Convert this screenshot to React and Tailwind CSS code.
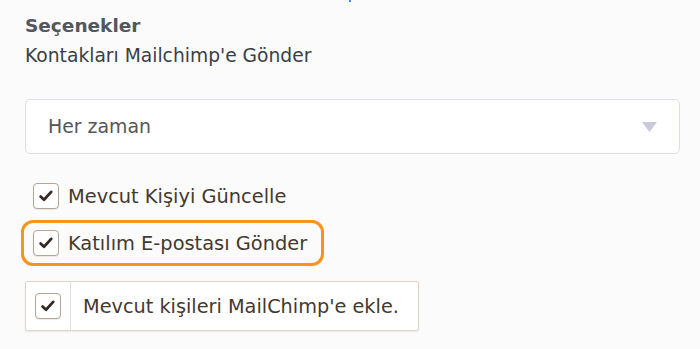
import React from "react";

function Check() {
  return (
    <div className="w-[26px] h-[26px] shrink-0 rounded-[4px] border-[1.5px] border-[#b5a595] bg-white flex items-center justify-center shadow-[0_1px_1px_rgba(0,0,0,0.08)]">
      <svg width="18" height="18" viewBox="0 0 18 18" fill="none">
        <path d="M3.6 9.6 L7 12.8 L14.2 4.9" stroke="#352b23" strokeWidth="2.8" strokeLinecap="round" strokeLinejoin="round" />
      </svg>
    </div>
  );
}

export default function App() {
  return (
    <div
      className="min-h-screen w-full bg-[#fbfbfb] pl-[25px] pt-px"
      style={{ fontFamily: '"DejaVu Sans", "Liberation Sans", sans-serif' }}
    >
      <div className="h-0">
        <div className="ml-[324px] -mt-px w-[2px] h-[2px] bg-[#3b8ef0]" />
      </div>
      <div className="mt-[14px] text-[18.5px] leading-[24px] font-bold text-[#52575e]">Seçenekler</div>
      <div className="mt-[6px] text-[18.7px] leading-[24px] text-[#3a3f44]">Kontakları Mailchimp'e Gönder</div>

      <div className="mt-[31px] w-[655px] h-[55px] rounded-[5px] border border-[#dcdcec] bg-white flex items-center justify-between pl-[22px] pr-[22px]">
        <span className="text-[18.9px] text-[#555555]">Her zaman</span>
        <svg width="15" height="10" viewBox="0 0 15 10">
          <path d="M0 0 H15 L7.5 10 Z" fill="#c9c9dc" />
        </svg>
      </div>

      <div className="mt-[29px] ml-[8px] flex items-center gap-[9px] h-[26px]">
        <Check />
        <span className="text-[19.4px] leading-[24px] text-[#44392f] mt-[2px]">Mevcut Kişiyi Güncelle</span>
      </div>

      <div className="mt-[11px] -ml-[4px] w-[303px] h-[46px] rounded-[12px] border-[3px] border-[#f7931e] flex items-center gap-[9px] pl-[9px]">
        <Check />
        <span className="text-[19.4px] leading-[24px] text-[#44392f] mt-[2px]">Katılım E-postası Gönder</span>
      </div>

      <div className="mt-[15px] w-[394px] h-[50px] border border-[#ddd6cf] bg-white flex shadow-[0_1px_2px_rgba(0,0,0,0.08)] rounded-[2px]">
        <div className="w-[45px] border-r border-[#e6dfd8] flex items-center justify-center">
          <Check />
        </div>
        <div className="flex items-center pl-[12px]">
          <span className="text-[19.3px] leading-[24px] text-[#44392f] mt-[2px]">Mevcut kişileri MailChimp'e ekle.</span>
        </div>
      </div>
    </div>
  );
}
